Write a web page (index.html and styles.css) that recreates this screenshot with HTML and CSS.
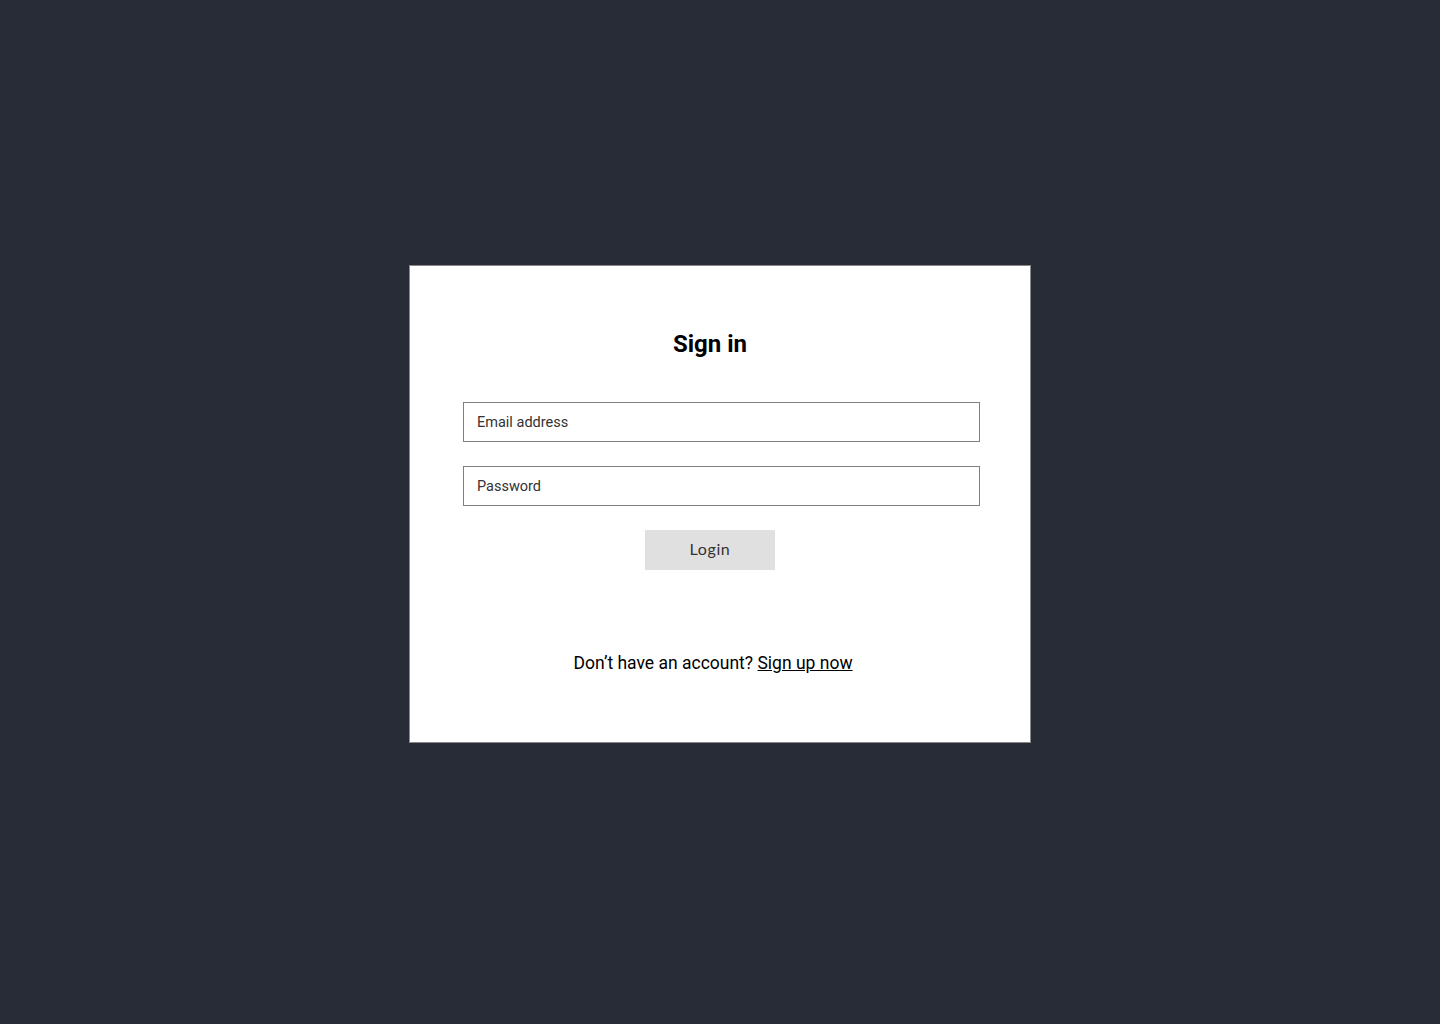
FILE: index.html
```html
<!DOCTYPE html>
<html lang="en">
<head>
<meta charset="utf-8">
<title>Sign in</title>
<link rel="stylesheet" href="styles.css">
</head>
<body>
<main class="page">
  <form class="card">
    <h1 class="title">Sign in</h1>
    <input class="field" type="email" placeholder="Email address">
    <input class="field" type="password" placeholder="Password">
    <button class="login" type="button">Login</button>
    <p class="signup">Don’t have an account? <a href="#" class="signup-link">Sign up now</a></p>
  </form>
</main>
</body>
</html>
```
FILE: styles.css
```css
* { box-sizing: border-box; }
html, body { margin: 0; padding: 0; }
body {
  background: #282c36;
  font-family: Roboto, "Liberation Sans", sans-serif;
  min-height: 1024px;
}
.page {
  padding-top: 265px;
  padding-left: 409px;
}
.card {
  width: 622px;
  background: #fff;
  border: 1px solid #8a8a8a;
  padding: 64px 73px 68px 53px;
  display: flex;
  flex-direction: column;
  align-items: center;
}
.title {
  margin: 0 0 44px;
  font-size: 24px;
  line-height: 28px;
  font-weight: 700;
  color: #000;
}
.field {
  align-self: flex-start;
  width: 517px;
  height: 40px;
  border: 1px solid #7f7f7f;
  border-radius: 0;
  padding: 0 13px;
  margin: 0 0 24px;
  font-family: Roboto, "Liberation Sans", sans-serif;
  font-size: 14.5px;
  color: #333;
  outline: none;
}
.field::placeholder { color: #333; opacity: 1; }
.login {
  width: 130px;
  height: 40px;
  border: none;
  background: #e0e0e0;
  font-family: Lato, Inter, sans-serif;
  font-size: 16px;
  color: #333;
  letter-spacing: 0.6px;
  padding: 0 0 3px;
  margin: 0;
}
.signup {
  margin: 83px 0 0 6px;
  font-size: 17.5px;
  line-height: 21px;
  color: #000;
}
.signup-link {
  color: #000;
  text-decoration: underline;
}
```
